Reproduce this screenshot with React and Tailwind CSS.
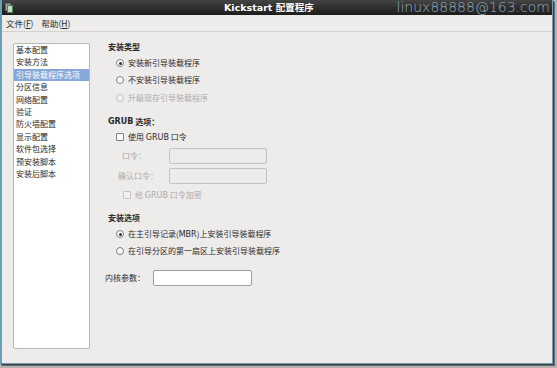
import React from "react";

const CJK = { fontFamily: '"Noto Sans CJK SC", "DejaVu Sans", sans-serif' };

function Radio({ checked, disabled }) {
  return (
    <span
      className={`w-[8px] h-[8px] rounded-full border flex items-center justify-center ${
        disabled ? "border-[#c4c4c4] bg-[#f1f0ee]" : "border-[#7d7d7d] bg-[#fbfbfb]"
      }`}
    >
      {checked && <span className="w-[3px] h-[3px] rounded-full bg-[#303030]" />}
    </span>
  );
}

function Check({ disabled }) {
  return (
    <span
      className={`w-[8px] h-[8px] rounded-[1px] border ${
        disabled ? "border-[#c4c4c4] bg-[#f1f0ee]" : "border-[#7d7d7d] bg-[#fbfbfb]"
      }`}
    />
  );
}

const items = [
  "基本配置",
  "安装方法",
  "引导装载程序选项",
  "分区信息",
  "网络配置",
  "验证",
  "防火墙配置",
  "显示配置",
  "软件包选择",
  "预安装脚本",
  "安装后脚本",
];

export default function App() {
  return (
    <div className="w-[557px] h-[368px] bg-[#b3b3b3] overflow-hidden" style={CJK}>
      <div className="w-[553px] h-[364px] bg-[#edeceb] border-l-2 border-r border-b border-[#6b9db5] shadow-[1px_1px_0_#3f3f3f,2px_2px_0_#6a6a6a] flex flex-col">
        {/* title bar */}
        <div className="h-[15px] bg-gradient-to-b from-[#444444] to-[#1c1c1c] flex items-center relative">
          <div className="ml-[3px] w-[8px] h-[10px] relative">
            <div className="absolute left-0 top-0 w-[6px] h-[8px] bg-[#9aa89c] border border-[#5d6b5f]" />
            <div className="absolute left-[2px] top-[2px] w-[6px] h-[8px] bg-[#c9d8c6] border border-[#52805a]" />
          </div>
          <div className="ml-[211px] text-[9.5px] font-bold text-white leading-none" style={{ fontFamily: '"DejaVu Sans", "Noto Sans CJK SC", sans-serif' }}>
            Kickstart 配置程序
          </div>
          <div
            className="absolute right-[2px] top-[0px] text-[14px] font-extralight text-[#8fb0c4] leading-none"
            style={{ fontFamily: '"DejaVu Sans", sans-serif' }}
          >
            linux88888@163.com
          </div>
        </div>
        {/* menu bar */}
        <div className="h-[17px] flex items-center text-[8.5px] text-[#2a2a2a] border-b border-[#d3d2cf]">
          <span className="ml-[4px]">
            文件(<span className="underline">F</span>)
          </span>
          <span className="ml-[8px]">
            帮助(<span className="underline">H</span>)
          </span>
        </div>
        {/* body */}
        <div className="flex flex-1">
          <div className="ml-[11px] mt-[11px] w-[77px] h-[306px] bg-white border border-[#b9b9b9] rounded-[2px] text-[8px] text-[#2a2a2a]">
            {items.map((t, i) => (
              <div
                key={t}
                className={`h-[12.4px] leading-[12.4px] pl-[2px] ${i === 2 ? "bg-[#86a7d8] text-white" : ""}`}
              >
                {t}
              </div>
            ))}
          </div>
          <div className="ml-[15px] flex flex-col text-[8px] text-[#2a2a2a]">
            <div className="mt-[7px] h-[16px] flex items-center ml-[3px] font-bold">安装类型</div>
            <div className="h-[16px] flex items-center ml-[11px] gap-[4px]">
              <Radio checked />
              <span>安装新引导装载程序</span>
            </div>
            <div className="h-[18px] flex items-center ml-[11px] gap-[4px]">
              <Radio />
              <span>不安装引导装载程序</span>
            </div>
            <div className="h-[18px] flex items-center ml-[11px] gap-[4px] text-[#ababab]">
              <Radio disabled />
              <span>升级现存引导装载程序</span>
            </div>
            <div className="mt-[7px] h-[16px] flex items-center ml-[3px] font-bold" >
              <span style={{ fontFamily: '"DejaVu Sans", sans-serif' }}>GRUB</span>&nbsp;选项：
            </div>
            <div className="h-[14px] flex items-center ml-[11px] gap-[4px]">
              <Check />
              <span>
                使用 <span style={{ fontFamily: '"DejaVu Sans", sans-serif' }}>GRUB</span> 口令
              </span>
            </div>
            <div className="mt-[4px] h-[16px] flex items-center text-[#ababab]">
              <span className="ml-[17px] w-[47px]">口令：</span>
              <div className="w-[98px] h-[16px] border border-[#c2c2c2] rounded-[2px] bg-[#edeceb]" />
            </div>
            <div className="mt-[4px] h-[16px] flex items-center text-[#ababab]">
              <span className="ml-[13px] w-[51px]">确认口令：</span>
              <div className="w-[98px] h-[16px] border border-[#c2c2c2] rounded-[2px] bg-[#edeceb]" />
            </div>
            <div className="mt-[3px] h-[16px] flex items-center ml-[18px] gap-[4px] text-[#ababab]">
              <Check disabled />
              <span>
                给 <span style={{ fontFamily: '"DejaVu Sans", sans-serif' }}>GRUB</span> 口令加密
              </span>
            </div>
            <div className="mt-[7px] h-[16px] flex items-center ml-[3px] font-bold">安装选项</div>
            <div className="h-[16px] flex items-center ml-[11px] gap-[4px]">
              <Radio checked />
              <span>
                在主引导记录(<span style={{ fontFamily: '"DejaVu Sans", sans-serif' }}>MBR</span>)上安装引导装载程序
              </span>
            </div>
            <div className="mt-[1px] h-[16px] flex items-center ml-[11px] gap-[4px]">
              <Radio />
              <span>在引导分区的第一扇区上安装引导装载程序</span>
            </div>
            <div className="mt-[11px] h-[16px] flex items-center">
              <span className="w-[48px]">内核参数：</span>
              <div className="w-[99px] h-[16px] border border-[#9d9d9d] rounded-[2px] bg-white" />
            </div>
          </div>
        </div>
      </div>
    </div>
  );
}
